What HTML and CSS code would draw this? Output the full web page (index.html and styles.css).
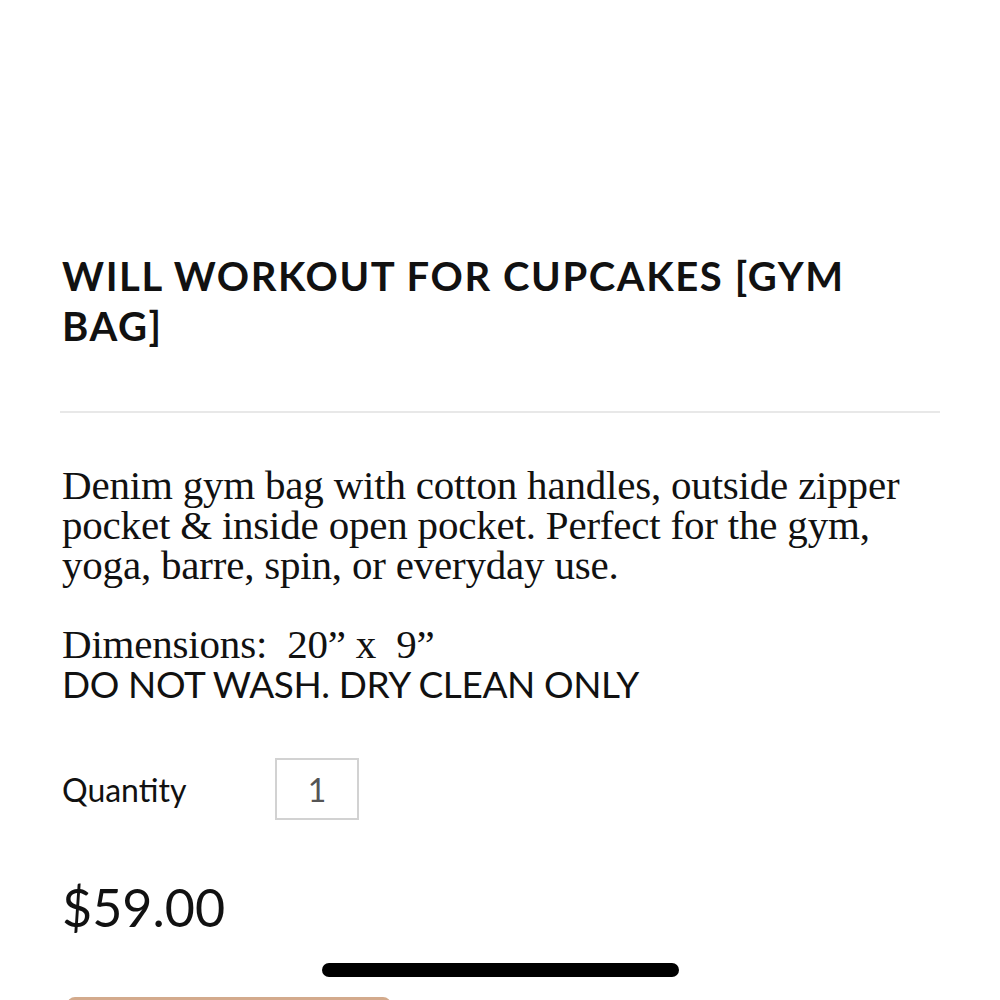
FILE: index.html
```html
<!DOCTYPE html>
<html>
<head>
<meta charset="utf-8">
<link rel="stylesheet" href="styles.css">
</head>
<body>
<main class="product">
  <h1 class="title">WILL WORKOUT FOR CUPCAKES [GYM BAG]</h1>
  <hr class="rule">
  <div class="desc">
    <p class="serif">Denim gym bag with cotton handles, outside zipper pocket &amp; inside open pocket. Perfect for the gym, yoga, barre, spin, or everyday use.</p>
    <p class="serif dims">Dimensions:&nbsp; 20” x&nbsp; 9”</p>
    <p class="sans">DO NOT WASH. DRY CLEAN ONLY</p>
  </div>
  <div class="qty-row">
    <span class="qty-label">Quantity</span>
    <div class="qty-box">1</div>
  </div>
  <div class="price">$59.00</div>
  <div class="button"></div>
  <div class="home"></div>
</main>
</body>
</html>
```
FILE: styles.css
```css
html, body {
  margin: 0;
  padding: 0;
  background: #fff;
  color: #111;
}
.product {
  padding: 251px 60px 0 60px;
  position: relative;
  height: 1000px;
  box-sizing: border-box;
  overflow: hidden;
}
.title {
  margin: 0 0 0 2px;
  font-family: "Lato", sans-serif;
  font-weight: 700;
  font-size: 40px;
  line-height: 50px;
  letter-spacing: 1.6px;
  width: 820px;
}
.rule {
  border: 0;
  height: 2px;
  background: #e8e8e8;
  margin: 60px 0 0 0;
}
.desc {
  margin-top: 52px;
  padding-left: 2px;
}
.desc p {
  margin: 0;
}
.serif {
  font-family: "Liberation Serif", serif;
  font-size: 41px;
  line-height: 40px;
  letter-spacing: -0.2px;
}
.desc .dims {
  margin-top: 39px;
}
.sans {
  font-family: "Lato", sans-serif;
  font-size: 37px;
  line-height: 40px;
  letter-spacing: -0.4px;
}
.qty-row {
  display: flex;
  align-items: center;
  margin-top: 54px;
  padding-left: 2px;
}
.qty-label {
  font-family: "Lato", sans-serif;
  font-size: 32px;
  width: 213px;
}
.qty-box {
  width: 84px;
  height: 62px;
  border: 2px solid #d2d2d2;
  box-sizing: border-box;
  display: flex;
  align-items: center;
  justify-content: center;
  font-family: "Lato", sans-serif;
  font-size: 32px;
  color: #555;
}
.price {
  margin-top: 57px;
  margin-left: 2px;
  font-family: "Lato", sans-serif;
  font-weight: 400;
  font-size: 52px;
  line-height: 60px;
}
.home {
  position: absolute;
  left: 322px;
  top: 963px;
  width: 357px;
  height: 14px;
  border-radius: 7px;
  background: #000;
}
.button {
  position: absolute;
  left: 67px;
  top: 997px;
  width: 324px;
  height: 40px;
  border-radius: 8px;
  background: #d3aa8c;
}
```
